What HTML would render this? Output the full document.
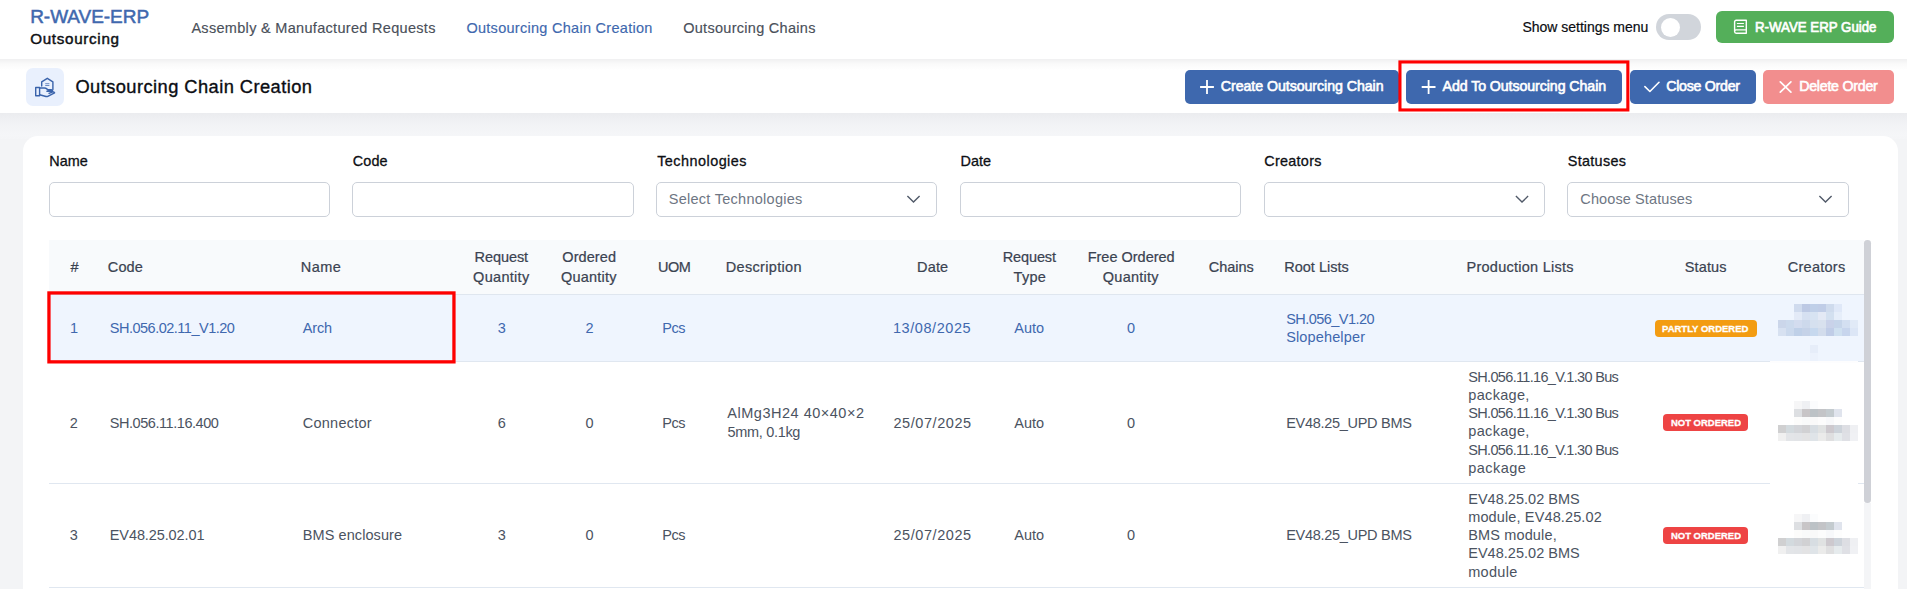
<!DOCTYPE html>
<html lang="en">
<head>
<meta charset="utf-8">
<title>Outsourcing Chain Creation</title>
<style>
*{box-sizing:border-box;margin:0;padding:0}
html,body{width:1907px;height:589px;overflow:hidden}
body{background:#f3f4f6;font-family:"Liberation Sans",sans-serif;position:relative}
.a{position:absolute}
.t{position:absolute;white-space:nowrap;line-height:20px}
.nav{left:0;top:0;width:1907px;height:59px;background:#fff;box-shadow:0 1px 5px rgba(0,0,0,.09)}
.sub{left:0;top:59px;width:1907px;height:54px;background:linear-gradient(#f0f0f1 0,#fafafa 5px,#fff 11px)}
.gap{left:0;top:113px;width:1907px;height:26px;background:linear-gradient(#ebecef 0,#f1f2f5 10px,#f5f6f8 22px,#f4f5f7 26px)}
.btn{position:absolute;top:70px;height:34px;border-radius:5px;background:#3e68ae}
.card{left:23px;top:136px;width:1875px;height:470px;background:#fff;border-radius:15px}
.inp{position:absolute;top:182px;height:35px;width:281px;border:1px solid #ccd1d9;border-radius:5px;background:#fff}
.thead{left:49px;top:240px;width:1815px;height:55px;background:#f8fafc;border-bottom:1px solid #dfe6ef}
.row{position:absolute;left:49px;width:1815px;border-bottom:1px solid #e0e7f0}
.badge{position:absolute;height:17px;border-radius:4px}
.red{position:absolute;border:3px solid #fe0000}
.px i{position:absolute;width:8px;height:8px}
</style>
</head>
<body>

<div class="a nav"></div>
<div class="a sub"></div>
<div class="a gap"></div>
<div class="a" style="left:1656px;top:14px;width:45px;height:25.6px;border-radius:13px;background:#d1d5db"><div class="a" style="left:4.7px;top:3.6px;width:19.2px;height:19.2px;border-radius:50%;background:#fff"></div></div>
<div class="a" style="left:1716px;top:10.8px;width:178px;height:32px;border-radius:6px;background:#54af5a"></div>
<svg class="a" style="left:1733px;top:19px" width="15" height="16" viewBox="0 0 15 16" fill="none" stroke="#fff" stroke-width="1.4" stroke-linejoin="round"><path d="M1.600 12.600V2.800C1.600 1.900 2.300 1.200 3.200 1.200H13.300V14.200H3.200C2.300 14.200 1.600 13.500 1.600 12.600C1.600 11.700 2.300 10.900 3.200 10.900H13.300"/><path d="M3.900 4.500h7M3.900 7.350h7" stroke-width="1.200"/></svg>
<div class="a" style="left:26px;top:68px;width:38px;height:38px;border-radius:7px;background:#e9f0fd"></div>
<svg class="a" style="left:34px;top:77px" width="23" height="22" viewBox="0 0 23 22" fill="none" stroke="#3a63ab" stroke-width="1.4" stroke-linejoin="round" stroke-linecap="round"><g transform="translate(0.60 0.40)"><path d="M7.1 8.600V4.400L12.700 .9L18.300 4.400V12.200"/><path d="M11 6.300h3.400M11 8.100h3.400" stroke-width=".9" stroke-opacity=".8"/><path d="M1.1 10.100h3.900v8.200h-3.900z"/><path d="M5 10.600h4.800c1 0 1.900.4 2.700 1.100l.8.700h3.300c.9 0 1.500.5 1.500 1.400h-5.800"/><path d="M5 17.400l6.400 1.700c.6.100 1.200.1 1.800-.2l6.800-3.400c-.5-1-1.500-1.200-2.400-.8l-3.200 1.200"/></g></svg>
<div class="btn" style="left:1185px;width:214px"></div>
<div class="btn" style="left:1406px;width:216px"></div>
<div class="btn" style="left:1630px;width:126px"></div>
<div class="btn" style="left:1763px;width:131px;background:#f28e8e"></div>
<svg class="a" style="left:1200px;top:80px" width="14" height="14" viewBox="0 0 14 14" stroke="#fff" stroke-width="1.8"><path d="M7 .1V13.9M.1 7H13.9"/></svg><svg class="a" style="left:1421px;top:80px" width="15" height="15" viewBox="0 0 15 15" stroke="#fff" stroke-width="1.8"><g transform="translate(0.60 0.00)"><path d="M7 .1V13.9M.1 7H13.9"/></g></svg>
<svg class="a" style="left:1644px;top:80px" width="16" height="13" viewBox="0 0 16 13" fill="none" stroke="#fff" stroke-width="1.6" stroke-linecap="round" stroke-linejoin="round"><path d="M.9 6.600 L5.900 11.500 L15 2.300"/></svg>
<svg class="a" style="left:1779px;top:80px" width="13" height="14" viewBox="0 0 13 14" fill="none" stroke="#fff" stroke-width="1.7" stroke-linecap="round"><g transform="translate(0.50 0.50)"><path d="M.8 1.300 L11.400 11.700 M11.400 1.300 L.8 11.700"/></g></svg>
<svg class="a" style="left:1390px;top:55px" width="250" height="65"><rect x="9.95" y="6.95" width="227.9" height="48" fill="none" stroke="#fe0000" stroke-width="3.1"/></svg>
<div class="a card"></div>
<div class="inp" style="left:49px"></div>
<div class="inp" style="left:352px;width:282px"></div>
<div class="inp" style="left:656px"></div>
<div class="inp" style="left:960px"></div>
<div class="inp" style="left:1264px"></div>
<div class="inp" style="left:1567px;width:282px"></div>
<svg class="a" style="left:906px;top:194px" width="16" height="11" viewBox="0 0 16 11" fill="none" stroke="#515a69" stroke-width="1.4"><g transform="translate(0.00 0.30)"><path d="M1.400 1.800 L7.500 7.800 L13.600 1.800"/></g></svg><svg class="a" style="left:1514px;top:194px" width="16" height="11" viewBox="0 0 16 11" fill="none" stroke="#515a69" stroke-width="1.4"><g transform="translate(0.50 0.30)"><path d="M1.400 1.800 L7.500 7.800 L13.600 1.800"/></g></svg><svg class="a" style="left:1818px;top:194px" width="16" height="11" viewBox="0 0 16 11" fill="none" stroke="#515a69" stroke-width="1.4"><g transform="translate(0.00 0.30)"><path d="M1.400 1.800 L7.500 7.800 L13.600 1.800"/></g></svg>
<div class="a thead"></div>
<div class="row" style="top:295px;height:67px;background:#eff5fe"></div>
<div class="row" style="top:362px;height:122px"></div>
<div class="row" style="top:484px;height:104px"></div>
<div class="a" style="left:1864.3px;top:240px;width:6.6px;height:263px;border-radius:3.3px;background:#cfd1d7"></div>
<div class="a" style="left:1864.3px;top:503px;width:6.6px;height:90px;background:#f4f5f7"></div>
<div class="a" style="left:1770px;top:361px;width:88px;height:2px;background:#fdfdfe"></div><div class="a" style="left:1770px;top:483px;width:88px;height:2px;background:#fff"></div>
<div class="badge" style="left:1655px;top:320px;width:102px;background:#f39c12"></div>
<div class="badge" style="left:1663px;top:414px;width:85px;background:#ee4444"></div>
<div class="badge" style="left:1663px;top:527px;width:85px;background:#ee4444"></div>
<svg class="a" style="left:40px;top:285px" width="425" height="85"><rect x="8.95" y="7.950" width="405" height="68.9" fill="none" stroke="#fe0000" stroke-width="3.3"/></svg>

<div class="px"><i style="left:1794px;top:304px;background:#d0dbee"></i><i style="left:1802px;top:304px;background:#bdc9e4"></i><i style="left:1810px;top:304px;background:#bfcfe8"></i><i style="left:1818px;top:304px;background:#c0cde7"></i><i style="left:1826px;top:304px;background:#cfdbed"></i><i style="left:1834px;top:304px;background:#dfe8f8"></i><i style="left:1794px;top:312px;background:#e3eaf7"></i><i style="left:1802px;top:312px;background:#d6e0f1"></i><i style="left:1810px;top:312px;background:#d7e3f2"></i><i style="left:1818px;top:312px;background:#e3e9f5"></i><i style="left:1826px;top:312px;background:#d3e0f0"></i><i style="left:1834px;top:312px;background:#e6eefa"></i><i style="left:1778px;top:320px;background:#cbd6ea"></i><i style="left:1786px;top:320px;background:#ccdaed"></i><i style="left:1794px;top:320px;background:#d3dcef"></i><i style="left:1802px;top:320px;background:#cdd9ec"></i><i style="left:1810px;top:320px;background:#d5e0ef"></i><i style="left:1818px;top:320px;background:#d8e1ee"></i><i style="left:1826px;top:320px;background:#c9d2e9"></i><i style="left:1834px;top:320px;background:#c6d5ea"></i><i style="left:1842px;top:320px;background:#d3dff1"></i><i style="left:1850px;top:320px;background:#e1eaf7"></i><i style="left:1778px;top:328px;background:#d7e1f1"></i><i style="left:1786px;top:328px;background:#cbd9ed"></i><i style="left:1794px;top:328px;background:#bfd0e8"></i><i style="left:1802px;top:328px;background:#c5d2e8"></i><i style="left:1810px;top:328px;background:#c6d8ee"></i><i style="left:1818px;top:328px;background:#d2dcec"></i><i style="left:1826px;top:328px;background:#c0cde7"></i><i style="left:1834px;top:328px;background:#cfe0f0"></i><i style="left:1842px;top:328px;background:#c7d5ed"></i><i style="left:1850px;top:328px;background:#dce6f6"></i><i style="left:1810px;top:345px;background:#e6edf9"></i><i style="left:1810px;top:353px;background:#ecf2fc"></i><i style="left:1794px;top:401px;background:#f6f6f7"></i><i style="left:1802px;top:401px;background:#eff0f3"></i><i style="left:1810px;top:401px;background:#fbfcfd"></i><i style="left:1794px;top:409px;background:#dddfe2"></i><i style="left:1802px;top:409px;background:#c8c5c7"></i><i style="left:1810px;top:409px;background:#bcc2c6"></i><i style="left:1818px;top:409px;background:#c3c4c7"></i><i style="left:1826px;top:409px;background:#c4cbcf"></i><i style="left:1834px;top:409px;background:#e0e4ed"></i><i style="left:1794px;top:417px;background:#fcfcfb"></i><i style="left:1802px;top:417px;background:#f9fafa"></i><i style="left:1810px;top:417px;background:#f9f9f9"></i><i style="left:1818px;top:417px;background:#fcfcfc"></i><i style="left:1826px;top:417px;background:#f7f8fa"></i><i style="left:1834px;top:417px;background:#fdfdfd"></i><i style="left:1778px;top:425px;background:#d0d0d1"></i><i style="left:1786px;top:425px;background:#d3dade"></i><i style="left:1794px;top:425px;background:#d3d5d9"></i><i style="left:1802px;top:425px;background:#d1d1d3"></i><i style="left:1810px;top:425px;background:#d7dde2"></i><i style="left:1818px;top:425px;background:#e0e2e2"></i><i style="left:1826px;top:425px;background:#cdc9ce"></i><i style="left:1834px;top:425px;background:#cdd3da"></i><i style="left:1842px;top:425px;background:#dddee3"></i><i style="left:1850px;top:425px;background:#eff0f3"></i><i style="left:1778px;top:433px;background:#f0f0f0"></i><i style="left:1786px;top:433px;background:#e3e5e8"></i><i style="left:1794px;top:433px;background:#e2e4e7"></i><i style="left:1802px;top:433px;background:#e3e3e4"></i><i style="left:1810px;top:433px;background:#dfe4e8"></i><i style="left:1818px;top:433px;background:#ebebea"></i><i style="left:1826px;top:433px;background:#dfdfe0"></i><i style="left:1834px;top:433px;background:#e6ebed"></i><i style="left:1842px;top:433px;background:#dfe0e5"></i><i style="left:1850px;top:433px;background:#f0f1f4"></i><i style="left:1794px;top:514px;background:#f6f6f7"></i><i style="left:1802px;top:514px;background:#eff0f3"></i><i style="left:1810px;top:514px;background:#fbfcfd"></i><i style="left:1794px;top:522px;background:#dddfe2"></i><i style="left:1802px;top:522px;background:#c8c5c7"></i><i style="left:1810px;top:522px;background:#bcc2c6"></i><i style="left:1818px;top:522px;background:#c3c4c7"></i><i style="left:1826px;top:522px;background:#c4cbcf"></i><i style="left:1834px;top:522px;background:#e0e4ed"></i><i style="left:1794px;top:530px;background:#fcfcfb"></i><i style="left:1802px;top:530px;background:#f9fafa"></i><i style="left:1810px;top:530px;background:#f9f9f9"></i><i style="left:1818px;top:530px;background:#fcfcfc"></i><i style="left:1826px;top:530px;background:#f7f8fa"></i><i style="left:1834px;top:530px;background:#fdfdfd"></i><i style="left:1778px;top:538px;background:#d0d0d1"></i><i style="left:1786px;top:538px;background:#d3dade"></i><i style="left:1794px;top:538px;background:#d3d5d9"></i><i style="left:1802px;top:538px;background:#d1d1d3"></i><i style="left:1810px;top:538px;background:#d7dde2"></i><i style="left:1818px;top:538px;background:#e0e2e2"></i><i style="left:1826px;top:538px;background:#cdc9ce"></i><i style="left:1834px;top:538px;background:#cdd3da"></i><i style="left:1842px;top:538px;background:#dddee3"></i><i style="left:1850px;top:538px;background:#eff0f3"></i><i style="left:1778px;top:546px;background:#f0f0f0"></i><i style="left:1786px;top:546px;background:#e3e5e8"></i><i style="left:1794px;top:546px;background:#e2e4e7"></i><i style="left:1802px;top:546px;background:#e3e3e4"></i><i style="left:1810px;top:546px;background:#dfe4e8"></i><i style="left:1818px;top:546px;background:#ebebea"></i><i style="left:1826px;top:546px;background:#dfdfe0"></i><i style="left:1834px;top:546px;background:#e6ebed"></i><i style="left:1842px;top:546px;background:#dfe0e5"></i><i style="left:1850px;top:546px;background:#f0f1f4"></i></div>
<div class="t" style="left:30.2px;top:7px;font-size:19px;letter-spacing:-0.043px;color:#4068ae;-webkit-text-stroke:0.5px #4068ae;">R-WAVE-ERP</div>
<div class="t" style="left:30.2px;top:29px;font-size:15.2px;letter-spacing:0.691px;color:#0f1115;-webkit-text-stroke:0.45px #0f1115;">Outsourcing</div>
<div class="t" style="left:191.4px;top:18px;font-size:14.5px;letter-spacing:0.306px;color:#4a505a;-webkit-text-stroke:0.15px #4a505a;">Assembly &amp; Manufactured Requests</div>
<div class="t" style="left:466.4px;top:18px;font-size:14.5px;letter-spacing:0.283px;color:#4068ae;-webkit-text-stroke:0.15px #4068ae;">Outsourcing Chain Creation</div>
<div class="t" style="left:683.2px;top:18px;font-size:14.5px;letter-spacing:0.286px;color:#4a505a;-webkit-text-stroke:0.15px #4a505a;">Outsourcing Chains</div>
<div class="t" style="left:1522.4px;top:17px;font-size:14px;letter-spacing:-0.005px;color:#0b0d12;-webkit-text-stroke:0.2px #0b0d12;">Show settings menu</div>
<div class="t" style="left:1755.0px;top:17px;font-size:14.6px;letter-spacing:0px;color:#fff;-webkit-text-stroke:0.7px #fff;transform:scale(0.9097,1);transform-origin:0 15.232902033271719px;">R-WAVE ERP Guide</div>
<div class="t" style="left:75.4px;top:77px;font-size:18.3px;letter-spacing:0.44px;color:#0b0d12;-webkit-text-stroke:0.35px #0b0d12;">Outsourcing Chain Creation</div>
<div class="t" style="left:1220.8px;top:76px;font-size:14.2px;letter-spacing:-0.054px;color:#fff;-webkit-text-stroke:0.6px #fff;">Create Outsourcing Chain</div>
<div class="t" style="left:1442.5px;top:76px;font-size:14.2px;letter-spacing:-0.076px;color:#fff;-webkit-text-stroke:0.6px #fff;">Add To Outsourcing Chain</div>
<div class="t" style="left:1666.2px;top:76px;font-size:14.2px;letter-spacing:-0.268px;color:#fff;-webkit-text-stroke:0.6px #fff;">Close Order</div>
<div class="t" style="left:1799.2px;top:76px;font-size:14.2px;letter-spacing:-0.239px;color:#fff;-webkit-text-stroke:0.6px #fff;">Delete Order</div>
<div class="t" style="left:49.2px;top:151px;font-size:14.4px;letter-spacing:0.069px;color:#0d0f14;-webkit-text-stroke:0.3px #0d0f14;">Name</div>
<div class="t" style="left:352.7px;top:151px;font-size:14.4px;letter-spacing:0.165px;color:#0d0f14;-webkit-text-stroke:0.3px #0d0f14;">Code</div>
<div class="t" style="left:657.2px;top:151px;font-size:14.4px;letter-spacing:0.48px;color:#0d0f14;-webkit-text-stroke:0.3px #0d0f14;">Technologies</div>
<div class="t" style="left:960.5px;top:151px;font-size:14.4px;letter-spacing:-0.002px;color:#0d0f14;-webkit-text-stroke:0.3px #0d0f14;">Date</div>
<div class="t" style="left:1264.3px;top:151px;font-size:14.4px;letter-spacing:0.273px;color:#0d0f14;-webkit-text-stroke:0.3px #0d0f14;">Creators</div>
<div class="t" style="left:1567.8px;top:151px;font-size:14.4px;letter-spacing:0.3px;color:#0d0f14;-webkit-text-stroke:0.3px #0d0f14;">Statuses</div>
<div class="t" style="left:668.7px;top:189px;font-size:14.5px;letter-spacing:0.276px;color:#6e7683;">Select Technologies</div>
<div class="t" style="left:1580.3px;top:189px;font-size:14.5px;letter-spacing:0.112px;color:#6e7683;">Choose Statuses</div>
<div class="t" style="left:70.4px;top:257px;font-size:14.5px;letter-spacing:0px;color:#3b4351;-webkit-text-stroke:0.22px #3b4351;">#</div>
<div class="t" style="left:107.8px;top:257px;font-size:14.5px;letter-spacing:0.11px;color:#3b4351;-webkit-text-stroke:0.22px #3b4351;">Code</div>
<div class="t" style="left:300.7px;top:257px;font-size:14.5px;letter-spacing:0.471px;color:#3b4351;-webkit-text-stroke:0.22px #3b4351;">Name</div>
<div class="t" style="left:474.6px;top:247px;font-size:14.5px;letter-spacing:-0.086px;color:#3b4351;-webkit-text-stroke:0.22px #3b4351;">Request</div>
<div class="t" style="left:473.1px;top:267px;font-size:14.5px;letter-spacing:0.3px;color:#3b4351;-webkit-text-stroke:0.22px #3b4351;">Quantity</div>
<div class="t" style="left:562.3px;top:247px;font-size:14.5px;letter-spacing:0.083px;color:#3b4351;-webkit-text-stroke:0.22px #3b4351;">Ordered</div>
<div class="t" style="left:561.0px;top:267px;font-size:14.5px;letter-spacing:0.215px;color:#3b4351;-webkit-text-stroke:0.22px #3b4351;">Quantity</div>
<div class="t" style="left:658.1px;top:257px;font-size:14.5px;letter-spacing:-0.522px;color:#3b4351;-webkit-text-stroke:0.22px #3b4351;">UOM</div>
<div class="t" style="left:725.7px;top:257px;font-size:14.5px;letter-spacing:0.337px;color:#3b4351;-webkit-text-stroke:0.22px #3b4351;">Description</div>
<div class="t" style="left:917.1px;top:257px;font-size:14.5px;letter-spacing:0.153px;color:#3b4351;-webkit-text-stroke:0.22px #3b4351;">Date</div>
<div class="t" style="left:1002.7px;top:247px;font-size:14.5px;letter-spacing:-0.119px;color:#3b4351;-webkit-text-stroke:0.22px #3b4351;">Request</div>
<div class="t" style="left:1013.6px;top:267px;font-size:14.5px;letter-spacing:0.287px;color:#3b4351;-webkit-text-stroke:0.22px #3b4351;">Type</div>
<div class="t" style="left:1087.7px;top:247px;font-size:14.5px;letter-spacing:-0.004px;color:#3b4351;-webkit-text-stroke:0.22px #3b4351;">Free Ordered</div>
<div class="t" style="left:1102.8px;top:267px;font-size:14.5px;letter-spacing:0.257px;color:#3b4351;-webkit-text-stroke:0.22px #3b4351;">Quantity</div>
<div class="t" style="left:1208.7px;top:257px;font-size:14.5px;letter-spacing:-0.008px;color:#3b4351;-webkit-text-stroke:0.22px #3b4351;">Chains</div>
<div class="t" style="left:1284.3px;top:257px;font-size:14.5px;letter-spacing:-0.009px;color:#3b4351;-webkit-text-stroke:0.22px #3b4351;">Root Lists</div>
<div class="t" style="left:1466.5px;top:257px;font-size:14.5px;letter-spacing:0.255px;color:#3b4351;-webkit-text-stroke:0.22px #3b4351;">Production Lists</div>
<div class="t" style="left:1684.7px;top:257px;font-size:14.5px;letter-spacing:0.158px;color:#3b4351;-webkit-text-stroke:0.22px #3b4351;">Status</div>
<div class="t" style="left:1787.8px;top:257px;font-size:14.5px;letter-spacing:0.256px;color:#3b4351;-webkit-text-stroke:0.22px #3b4351;">Creators</div>
<div class="t" style="left:70.0px;top:318px;font-size:14.5px;letter-spacing:0px;color:#4068ae;">1</div>
<div class="t" style="left:109.8px;top:318px;font-size:14.5px;letter-spacing:-0.498px;color:#4068ae;">SH.056.02.11_V1.20</div>
<div class="t" style="left:302.8px;top:318px;font-size:14.5px;letter-spacing:-0.143px;color:#4068ae;">Arch</div>
<div class="t" style="left:497.7px;top:318px;font-size:14.5px;letter-spacing:0px;color:#4068ae;">3</div>
<div class="t" style="left:585.4px;top:318px;font-size:14.5px;letter-spacing:0px;color:#4068ae;">2</div>
<div class="t" style="left:662.3px;top:318px;font-size:14.5px;letter-spacing:-0.536px;color:#4068ae;">Pcs</div>
<div class="t" style="left:893.0px;top:318px;font-size:14.5px;letter-spacing:0.558px;color:#4068ae;">13/08/2025</div>
<div class="t" style="left:1014.2px;top:318px;font-size:14.5px;letter-spacing:0.052px;color:#4068ae;">Auto</div>
<div class="t" style="left:1127.0px;top:318px;font-size:14.5px;letter-spacing:0px;color:#4068ae;">0</div>
<div class="t" style="left:1286.2px;top:309px;font-size:14.5px;letter-spacing:-0.548px;color:#4068ae;">SH.056_V1.20</div>
<div class="t" style="left:1286.2px;top:327px;font-size:14.5px;letter-spacing:0.139px;color:#4068ae;">Slopehelper</div>
<div class="t" style="left:1662.3px;top:319px;font-size:9.9px;font-weight:700;letter-spacing:0px;color:#fff;-webkit-text-stroke:0.3px #fff;transform:scale(0.9622,1);transform-origin:0 13.228108108108108px;">PARTLY ORDERED</div>
<div class="t" style="left:69.8px;top:413px;font-size:14.5px;letter-spacing:0px;color:#4b5361;">2</div>
<div class="t" style="left:109.8px;top:413px;font-size:14.5px;letter-spacing:-0.449px;color:#4b5361;">SH.056.11.16.400</div>
<div class="t" style="left:302.8px;top:413px;font-size:14.5px;letter-spacing:0.237px;color:#4b5361;">Connector</div>
<div class="t" style="left:497.7px;top:413px;font-size:14.5px;letter-spacing:0px;color:#4b5361;">6</div>
<div class="t" style="left:585.4px;top:413px;font-size:14.5px;letter-spacing:0px;color:#4b5361;">0</div>
<div class="t" style="left:662.3px;top:413px;font-size:14.5px;letter-spacing:-0.536px;color:#4b5361;">Pcs</div>
<div class="t" style="left:727.3px;top:403px;font-size:14.5px;letter-spacing:0.513px;color:#4b5361;">AlMg3H24 40×40×2</div>
<div class="t" style="left:727.4px;top:422px;font-size:14.5px;letter-spacing:-0.305px;color:#4b5361;">5mm, 0.1kg</div>
<div class="t" style="left:893.4px;top:413px;font-size:14.5px;letter-spacing:0.58px;color:#4b5361;">25/07/2025</div>
<div class="t" style="left:1014.2px;top:413px;font-size:14.5px;letter-spacing:0.052px;color:#4b5361;">Auto</div>
<div class="t" style="left:1127.0px;top:413px;font-size:14.5px;letter-spacing:0px;color:#4b5361;">0</div>
<div class="t" style="left:1286.2px;top:413px;font-size:14.5px;letter-spacing:-0.291px;color:#4b5361;">EV48.25_UPD BMS</div>
<div class="t" style="left:1468.3px;top:367px;font-size:14.5px;letter-spacing:-0.671px;color:#4b5361;">SH.056.11.16_V.1.30 Bus</div>
<div class="t" style="left:1468.3px;top:385px;font-size:14.5px;letter-spacing:0.32px;color:#4b5361;">package,</div>
<div class="t" style="left:1468.3px;top:403px;font-size:14.5px;letter-spacing:-0.671px;color:#4b5361;">SH.056.11.16_V.1.30 Bus</div>
<div class="t" style="left:1468.3px;top:421px;font-size:14.5px;letter-spacing:0.32px;color:#4b5361;">package,</div>
<div class="t" style="left:1468.3px;top:440px;font-size:14.5px;letter-spacing:-0.671px;color:#4b5361;">SH.056.11.16_V.1.30 Bus</div>
<div class="t" style="left:1468.3px;top:458px;font-size:14.5px;letter-spacing:0.445px;color:#4b5361;">package</div>
<div class="t" style="left:1670.8px;top:413px;font-size:9.9px;font-weight:700;letter-spacing:0px;color:#fff;-webkit-text-stroke:0.3px #fff;transform:scale(0.9589,1);transform-origin:0 13.228108108108108px;">NOT ORDERED</div>
<div class="t" style="left:69.8px;top:525px;font-size:14.5px;letter-spacing:0px;color:#4b5361;">3</div>
<div class="t" style="left:109.8px;top:525px;font-size:14.5px;letter-spacing:-0.104px;color:#4b5361;">EV48.25.02.01</div>
<div class="t" style="left:302.8px;top:525px;font-size:14.5px;letter-spacing:0.073px;color:#4b5361;">BMS enclosure</div>
<div class="t" style="left:497.7px;top:525px;font-size:14.5px;letter-spacing:0px;color:#4b5361;">3</div>
<div class="t" style="left:585.4px;top:525px;font-size:14.5px;letter-spacing:0px;color:#4b5361;">0</div>
<div class="t" style="left:662.3px;top:525px;font-size:14.5px;letter-spacing:-0.536px;color:#4b5361;">Pcs</div>
<div class="t" style="left:893.4px;top:525px;font-size:14.5px;letter-spacing:0.58px;color:#4b5361;">25/07/2025</div>
<div class="t" style="left:1014.2px;top:525px;font-size:14.5px;letter-spacing:0.052px;color:#4b5361;">Auto</div>
<div class="t" style="left:1127.0px;top:525px;font-size:14.5px;letter-spacing:0px;color:#4b5361;">0</div>
<div class="t" style="left:1286.2px;top:525px;font-size:14.5px;letter-spacing:-0.291px;color:#4b5361;">EV48.25_UPD BMS</div>
<div class="t" style="left:1468.2px;top:489px;font-size:14.5px;letter-spacing:0.026px;color:#4b5361;">EV48.25.02 BMS</div>
<div class="t" style="left:1468.2px;top:507px;font-size:14.5px;letter-spacing:0.129px;color:#4b5361;">module, EV48.25.02</div>
<div class="t" style="left:1468.2px;top:525px;font-size:14.5px;letter-spacing:0.145px;color:#4b5361;">BMS module,</div>
<div class="t" style="left:1468.2px;top:543px;font-size:14.5px;letter-spacing:0.026px;color:#4b5361;">EV48.25.02 BMS</div>
<div class="t" style="left:1468.2px;top:562px;font-size:14.5px;letter-spacing:0.308px;color:#4b5361;">module</div>
<div class="t" style="left:1670.8px;top:526px;font-size:9.9px;font-weight:700;letter-spacing:0px;color:#fff;-webkit-text-stroke:0.3px #fff;transform:scale(0.9589,1);transform-origin:0 13.228108108108108px;">NOT ORDERED</div>
</body>
</html>
